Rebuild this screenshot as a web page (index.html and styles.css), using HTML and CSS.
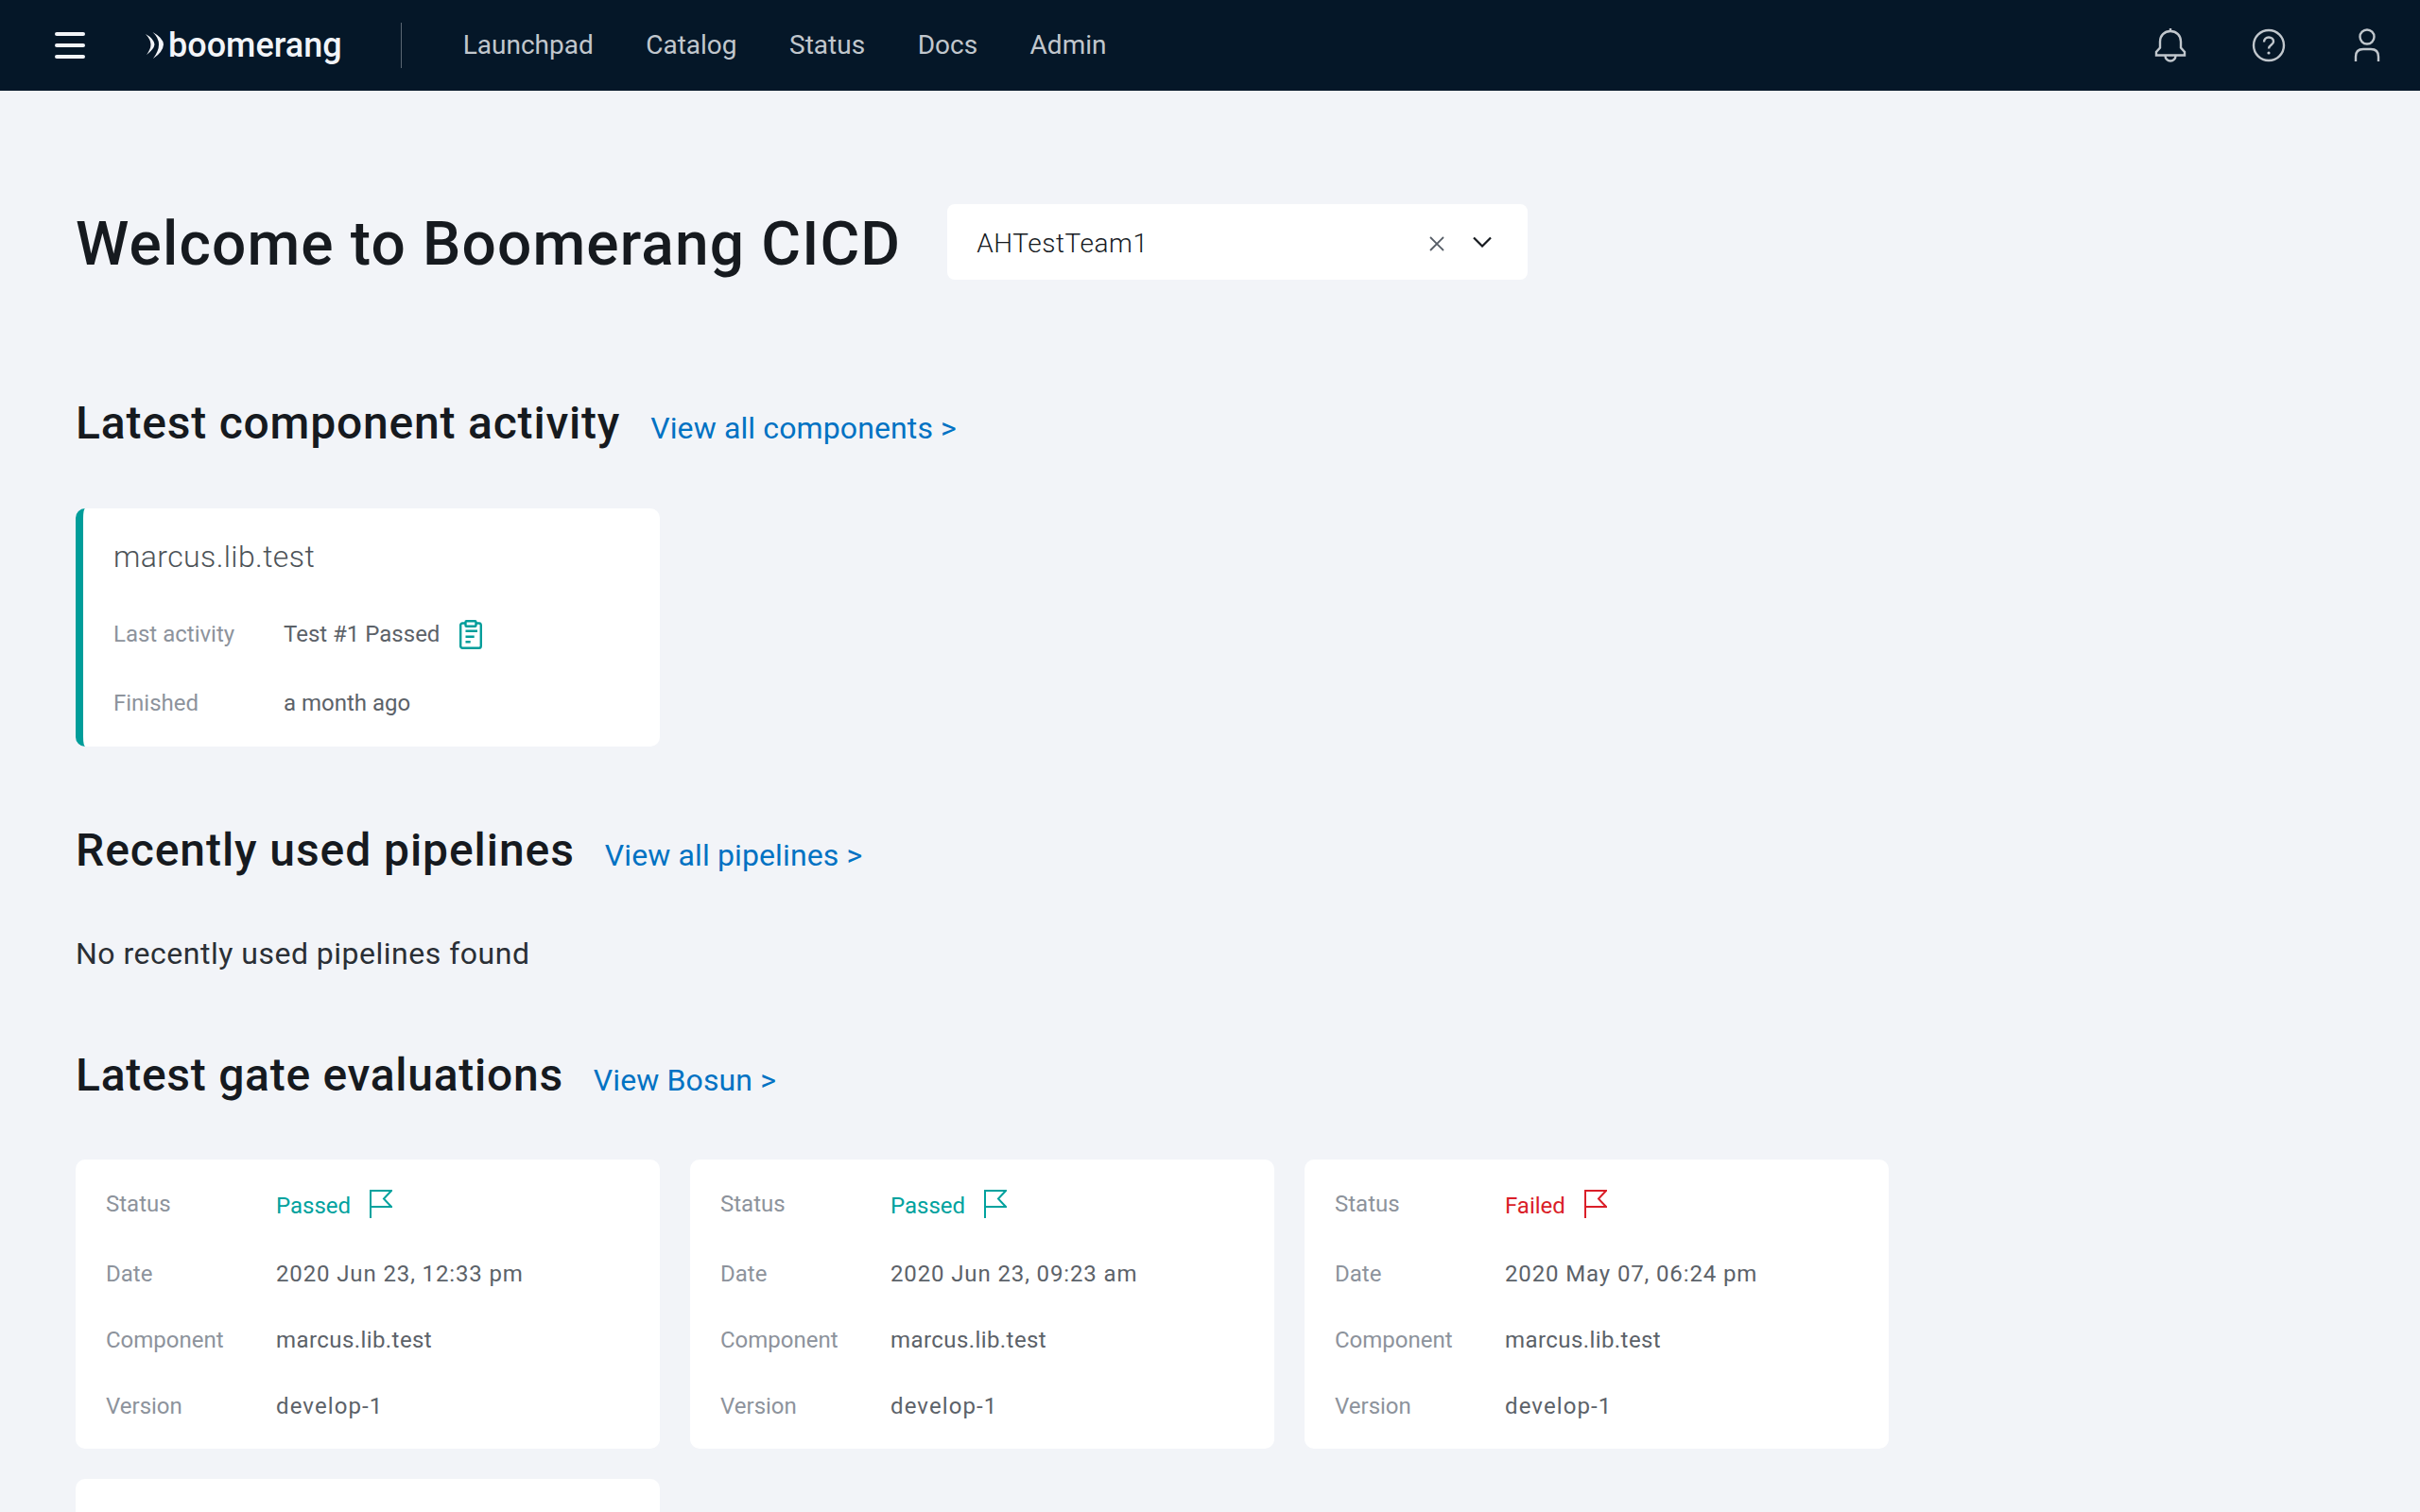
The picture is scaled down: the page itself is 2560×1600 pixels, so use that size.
FILE: index.html
```html
<!DOCTYPE html>
<html lang="en">
<head>
<meta charset="utf-8">
<title>Boomerang CICD</title>
<link rel="stylesheet" href="styles.css">
</head>
<body>
<header class="topbar">
  <button class="menu" aria-label="Menu"><span></span><span></span><span></span></button>
  <a class="logo">
    <svg class="logo-mark" width="22" height="30" viewBox="6 4 22 30"><path d="M8 7Q17 12 17.500 18Q17 23 9 29Q13.500 23 13.500 18Q13.500 13 8 7Z" fill="#f2f4f8"/><path d="M15.500 5Q26.500 11 27 18Q26.500 26 16 33Q22 25 22 18Q22 11 15.500 5Z" fill="#f2f4f8"/></svg>
    <span class="logo-text">boomerang</span>
  </a>
  <span class="divider"></span>
  <nav class="nav">
    <a>Launchpad</a><a>Catalog</a><a>Status</a><a>Docs</a><a>Admin</a>
  </nav>
  <div class="actions">
    <svg class="action" width="36" height="40" viewBox="0 0 36 40" fill="none" stroke="#c1c7cd" stroke-width="2.400"><path d="M18 2v3"/><path d="M3 30.500h30v-3.500l-4-4.500v-6.500c0-6.500-4.500-11-11-11S7 9.500 7 16v6.500l-4 4.500z"/><path d="M12.500 31a5.500 5.500 0 0 0 11 0"/></svg>
    <svg class="action" width="36" height="40" viewBox="0 0 36 40" fill="none" stroke="#c1c7cd" stroke-width="2.400"><circle cx="18" cy="20" r="16"/><path d="M13 16.500c0-3 2.200-5 5-5s5 1.800 5 4.500c0 3.500-5 3.500-5 7.500"/><circle cx="18" cy="28" r="1.600" fill="#c1c7cd" stroke="none"/></svg>
    <svg class="action" width="36" height="40" viewBox="0 0 36 40" fill="none" stroke="#c1c7cd" stroke-width="2.400"><circle cx="18" cy="11" r="7.500"/><path d="M6 37v-5c0-5 3-8 8-8h8c5 0 8 3 8 8v5"/></svg>
  </div>
</header>
<main class="page">
  <div class="title-row">
    <h1 class="title">Welcome to Boomerang CICD</h1>
    <div class="select">
      <span class="select-value">AHTestTeam1</span>
      <svg class="select-clear" width="16" height="16" viewBox="0 0 16 16" fill="none" stroke="#565d66" stroke-width="1.800"><path d="M1 1l14 14M15 1L1 15"/></svg>
      <svg class="select-caret" width="20" height="12" viewBox="0 0 20 12" fill="none" stroke="#161a1f" stroke-width="2.200"><path d="M1 1.500l9 9 9-9"/></svg>
    </div>
  </div>

  <div class="section-head first">
    <h2>Latest component activity</h2><a class="more">View all components &gt;</a>
  </div>
  <article class="activity">
    <h3 class="activity-name">marcus.lib.test</h3>
    <div class="activity-row">
      <span class="label">Last activity</span>
      <span class="value text">Test #1 Passed</span>
      <svg class="clip" width="24" height="31" viewBox="0 0 24 31" fill="none" stroke="#009d9a" stroke-width="2.400"><rect x="1.200" y="3.500" width="21.600" height="26.300" rx="2"/><rect x="6.500" y="1.200" width="11" height="5.500" rx="1" fill="#fff"/><path d="M6.500 11.700H19M6.500 17.700H15.700M6.500 23.300H11.700"/></svg>
    </div>
    <div class="activity-row last">
      <span class="label">Finished</span>
      <span class="value text">a month ago</span>
    </div>
  </article>

  <div class="section-head pipe-head">
    <h2>Recently used pipelines</h2><a class="more">View all pipelines &gt;</a>
  </div>
  <p class="empty">No recently used pipelines found</p>

  <div class="section-head gate-head">
    <h2>Latest gate evaluations</h2><a class="more">View Bosun &gt;</a>
  </div>
  <section class="gates">
    <article class="gate">
      <div class="gate-row status"><span class="label">Status</span><span class="state pass">Passed<svg width="24" height="30" viewBox="0 0 24 30" fill="none" stroke="currentColor" stroke-width="2"><path d="M1 30V1H23L15 9.500L23 18H1"/></svg></span></div>
      <div class="gate-row"><span class="label">Date</span><span class="value digits">2020 Jun 23, 12:33 pm</span></div>
      <div class="gate-row"><span class="label">Component</span><span class="value name">marcus.lib.test</span></div>
      <div class="gate-row"><span class="label">Version</span><span class="value version">develop-1</span></div>
    </article>
    <article class="gate">
      <div class="gate-row status"><span class="label">Status</span><span class="state pass">Passed<svg width="24" height="30" viewBox="0 0 24 30" fill="none" stroke="currentColor" stroke-width="2"><path d="M1 30V1H23L15 9.500L23 18H1"/></svg></span></div>
      <div class="gate-row"><span class="label">Date</span><span class="value digits">2020 Jun 23, 09:23 am</span></div>
      <div class="gate-row"><span class="label">Component</span><span class="value name">marcus.lib.test</span></div>
      <div class="gate-row"><span class="label">Version</span><span class="value version">develop-1</span></div>
    </article>
    <article class="gate">
      <div class="gate-row status"><span class="label">Status</span><span class="state fail">Failed<svg width="24" height="30" viewBox="0 0 24 30" fill="none" stroke="currentColor" stroke-width="2"><path d="M1 30V1H23L15 9.500L23 18H1"/></svg></span></div>
      <div class="gate-row"><span class="label">Date</span><span class="value digits">2020 May 07, 06:24 pm</span></div>
      <div class="gate-row"><span class="label">Component</span><span class="value name">marcus.lib.test</span></div>
      <div class="gate-row"><span class="label">Version</span><span class="value version">develop-1</span></div>
    </article>
    <article class="gate blank"></article>
  </section>
</main>
</body>
</html>
```
FILE: styles.css
```css
* { box-sizing: border-box; }
html, body { margin: 0; height: 100%; overflow: hidden; }
body { background: #f2f4f8; color: #161a1f; font-family: "Roboto", "Noto Sans", sans-serif; }
h1, h2, h3, p { margin: 0; }

.topbar { height: 96px; background: #051728; display: flex; align-items: center; padding-left: 58px; }
.menu { width: 32px; height: 28px; padding: 0; border: 0; background: none; display: flex; flex-direction: column; justify-content: space-between; }
.menu span { display: block; height: 4px; border-radius: 2px; background: #f2f4f8; }
.logo { display: flex; align-items: center; margin-left: 62px; color: #f2f4f8; }
.logo-mark { margin-right: 4px; }
.logo-text { font-size: 36px; font-weight: 500; line-height: 48px; }
.divider { width: 1px; height: 48px; background: #5a6672; margin-left: 62px; }
.nav { display: flex; gap: 55.500px; margin-left: 65px; }
.nav a { font-size: 28px; line-height: 40px; color: #c1c7cd; }
.actions { display: flex; gap: 68px; margin-left: auto; margin-right: 38px; }
.action { display: block; }

.page { padding: 120px 0 0 80px; }
.title-row { display: flex; align-items: center; gap: 49px; }
.title { font-size: 64px; line-height: 74px; padding-top: 6px; font-weight: 500; letter-spacing: 1.14px; }
.select { width: 614px; height: 80px; background: #fff; border-radius: 8px; display: flex; align-items: center; padding: 0 38px 0 31px; }
.select-value { flex: 1; font-size: 28px; font-weight: 300; letter-spacing: .55px; padding-top: 3px; }
.select-clear { margin-right: 30px; margin-top: 3px; }

.section-head { display: flex; align-items: baseline; gap: 32px; margin-top: 79px; }
.section-head.first { margin-top: 121px; }
.section-head.gate-head { margin-top: 74px; }
.section-head h2 { font-size: 48px; line-height: 60px; font-weight: 500; letter-spacing: .8px; padding-top: 1px; }
.section-head.pipe-head h2 { letter-spacing: .92px; }
.section-head.gate-head h2 { letter-spacing: .72px; }
.more { font-size: 32px; color: #0072c3; letter-spacing: .12px; }

.activity { width: 618px; height: 252px; margin-top: 60px; background: #fff; border-left: 8px solid #009d9a; border-radius: 10px; padding: 29px 0 0 32px; }
.activity-name { font-size: 32px; line-height: 44px; font-weight: 300; color: #4d5358; letter-spacing: .4px; }
.activity-row { display: flex; align-items: center; height: 36px; margin-top: 42px; }
.activity-row.last { margin-top: 37px; }
.activity-row .label { width: 180px; }
.clip { margin-left: 21px; }

.label { font-size: 24px; color: #8d939c; }
.value { font-size: 24px; color: #5c6269; }
.value.text { letter-spacing: 0; }
.value.name { letter-spacing: .42px; }
.value.digits { letter-spacing: .87px; }
.value.version { letter-spacing: 1.100px; }

.empty { margin-top: 55px; font-size: 32px; line-height: 48px; letter-spacing: .5px; color: #2a2f35; }

.gates { display: grid; grid-template-columns: repeat(3, 618px); gap: 32px; margin-top: 59px; }
.gate { height: 306px; background: #fff; border-radius: 10px; padding: 16px 32px 0; }
.gate-row { display: flex; align-items: center; height: 70px; }
.gate-row .label { width: 180px; }
.gate-row.status { align-items: flex-start; }
.gate-row.status .label { line-height: 62px; }
.state { display: flex; align-items: center; gap: 20px; height: 66px; font-size: 24px; }
.state svg { margin-top: -4px; }
.pass { color: #00a29e; }
.fail { color: #da1e28; }
```
